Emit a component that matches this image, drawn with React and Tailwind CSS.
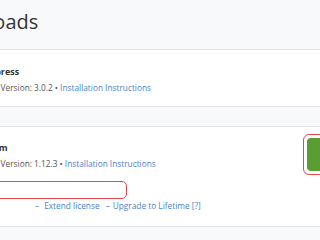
const Card = ({ children, className = '' }) => (
  <div className={`border-y border-[#e3e5e9] bg-white ${className}`}>{children}</div>
);

const App = () => {
  return (
    <main className="h-[240px] w-[320px] overflow-hidden bg-[#f8f9fb] font-['Open_Sans',sans-serif] text-[#333]">
      <div className="h-[49px] pt-[7px]">
        <h1 className="ml-[-66px] whitespace-nowrap text-[20px] font-normal leading-[30px]">Downloads</h1>
      </div>

      <div className="ml-[-25px] w-[420px]">
        <Card className="h-[58px] pt-[14px]">
          <h3 className="whitespace-nowrap text-[9px] font-bold leading-[16px]">Compress</h3>
          <p className="whitespace-nowrap text-[8.3px] leading-[15px] text-[#555]">
            Latest Version: 3.0.2 • <a className="text-[#4a82c6]">Installation Instructions</a>
          </p>
        </Card>

        <Card className="mt-[19px] flex h-[101px]">
          <div className="w-[328px] shrink-0 pt-[13px]">
            <h3 className="whitespace-nowrap text-[9px] font-bold leading-[16px]">Stream</h3>
            <p className="whitespace-nowrap text-[8.3px] leading-[15px] text-[#555]">
              Latest Version: 1.12.3 • <a className="text-[#4a82c6]">Installation Instructions</a>
            </p>
            <div className="mt-[10px] h-[18px] w-[152px] rounded-[5px] border border-[#e8474c] bg-white" />
            <p className="whitespace-nowrap text-[8.3px] leading-[14px] text-[#4a82c6]">
              <span className="ml-[60px]">–</span>
              <a className="ml-[5px]">Extend license</a>
              <span className="ml-[6px]">–</span>
              <a className="ml-[3px]">Upgrade to Lifetime [?]</a>
            </p>
          </div>
          <div className="pt-[7px]">
            <div className="rounded-[6px] border border-[#e8474c] p-[3px]">
              <div className="h-[33px] w-[80px] rounded-[4px] bg-[#5a9d33]" />
            </div>
          </div>
        </Card>
      </div>
    </main>
  );
};

export default App;
